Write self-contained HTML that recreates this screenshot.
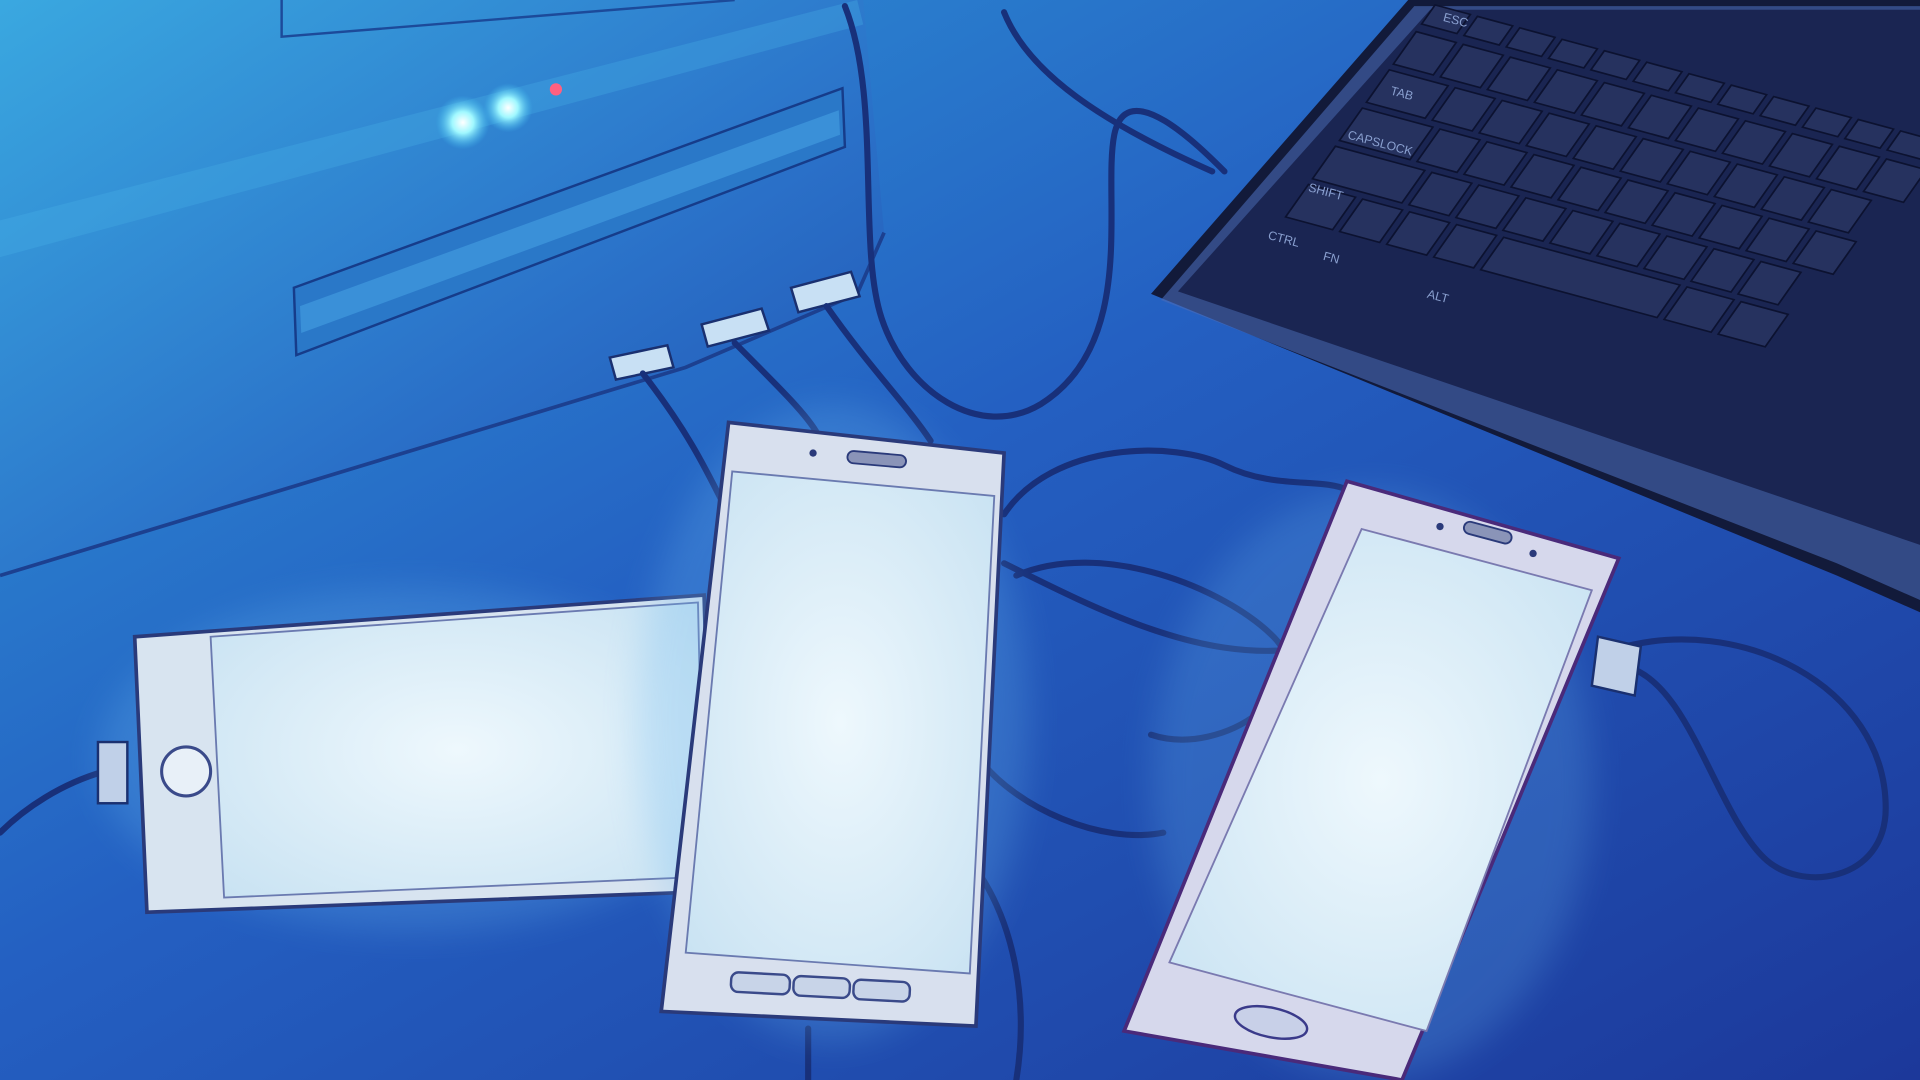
<!DOCTYPE html>
<html><head><meta charset="utf-8"><style>
html,body{margin:0;padding:0;width:1920px;height:1080px;overflow:hidden;background:#1e4cb0}
svg{display:block}
</style></head><body>
<svg width="1920" height="1080" viewBox="0 0 1568 882" preserveAspectRatio="none" xmlns="http://www.w3.org/2000/svg">
<defs>
<linearGradient id="bg" x1="0" y1="0" x2="1" y2="1">
<stop offset="0" stop-color="#2f9ad8"/><stop offset="0.45" stop-color="#2460c2"/><stop offset="1" stop-color="#1c389a"/>
</linearGradient>
<linearGradient id="pc" x1="0" y1="0" x2="1" y2="1">
<stop offset="0" stop-color="#3aa8e0"/><stop offset="0.6" stop-color="#2a70c8"/><stop offset="1" stop-color="#2050b0"/>
</linearGradient>
<radialGradient id="glow" cx="0.5" cy="0.5" r="0.5">
<stop offset="0" stop-color="#ffffff"/><stop offset="0.4" stop-color="#a0f8ff"/><stop offset="1" stop-color="#40c0f0" stop-opacity="0"/>
</radialGradient>
<radialGradient id="scr" cx="0.5" cy="0.5" r="0.7">
<stop offset="0" stop-color="#eef8fd"/><stop offset="1" stop-color="#c8e2f2"/>
</radialGradient>
<filter id="bl"><feGaussianBlur stdDeviation="14"/></filter>
</defs>
<rect width="1568" height="882" fill="url(#bg)"/>
<!-- PC tower -->
<polygon points="0,0 705,0 722,190 700,240 560,300 0,470" fill="url(#pc)"/>
<polyline points="0,470 560,300 700,240 722,190" fill="none" stroke="#1c4090" stroke-width="3"/>
<polygon points="0,180 700,0 705,20 0,210" fill="#48b4e8" opacity="0.3"/>
<polygon points="240,235 688,72 690,120 242,290" fill="#2a78c8" stroke="#163c8a" stroke-width="2"/>
<polygon points="245,250 685,90 686,110 246,272" fill="#3a90d8"/>
<polyline points="230,0 230,30 600,0" fill="none" stroke="#1c4a9a" stroke-width="2"/>
<circle cx="378" cy="100" r="22" fill="url(#glow)"/>
<circle cx="415" cy="88" r="20" fill="url(#glow)"/>
<circle cx="454" cy="73" r="5" fill="#ff6080"/>
<!-- USB plugs -->
<g fill="#c8e0f4" stroke="#1a3070" stroke-width="2">
<polygon points="498,292 545,282 550,300 503,310"/>
<polygon points="573,265 622,252 628,270 578,283"/>
<polygon points="646,235 695,222 702,242 652,255"/>
</g>
<!-- cables -->
<g fill="none" stroke="#18307a" stroke-width="5" stroke-linecap="round">
<path d="M525,305 C560,350 575,380 590,410"/>
<path d="M600,280 C640,320 660,340 668,355"/>
<path d="M675,250 C710,300 740,330 760,360"/>
<path d="M690,5 C720,80 700,200 720,260 C740,320 800,360 850,330 C930,280 900,160 910,110 C920,60 980,120 1000,140"/>
<path d="M820,10 C840,60 900,100 990,140"/>
<path d="M820,420 C860,360 960,360 1000,380 C1040,400 1080,390 1100,400"/>
<path d="M820,460 C900,500 980,540 1060,530"/>
<path d="M830,470 C900,440 1000,480 1040,520 C1080,560 1000,620 940,600"/>
<path d="M800,620 C830,660 900,690 950,680"/>
<path d="M1320,530 C1420,500 1540,560 1540,660 C1540,720 1470,730 1440,700 C1400,660 1380,560 1330,545"/>
<path d="M790,700 C830,750 840,820 830,882"/>
<path d="M85,630 C50,640 20,660 0,680"/>
<path d="M660,840 L660,882"/>
</g>
<!-- Laptop -->
<polygon points="940,240 1150,0 1568,0 1568,500 1500,470" fill="#121a3a"/>
<polygon points="948,245 1155,5 1568,5 1568,490 1500,460" fill="#4a6ab8" opacity="0.6"/>
<polygon points="962,238 1168,8 1568,8 1568,445 1510,425" fill="#1a2552"/>
<g fill="#26325f" stroke="#0c1230" stroke-width="1.5">
<g transform="matrix(0.96,0.26,-0.55,0.78,1172,4)">
<rect x="0" y="0" width="30" height="20"/><rect x="36" y="0" width="30" height="20"/><rect x="72" y="0" width="30" height="20"/><rect x="108" y="0" width="30" height="20"/><rect x="144" y="0" width="30" height="20"/><rect x="180" y="0" width="30" height="20"/><rect x="216" y="0" width="30" height="20"/><rect x="252" y="0" width="30" height="20"/><rect x="288" y="0" width="30" height="20"/><rect x="324" y="0" width="30" height="20"/><rect x="360" y="0" width="30" height="20"/><rect x="396" y="0" width="30" height="20"/>
<rect x="0" y="28" width="34" height="34"/><rect x="40" y="28" width="34" height="34"/><rect x="80" y="28" width="34" height="34"/><rect x="120" y="28" width="34" height="34"/><rect x="160" y="28" width="34" height="34"/><rect x="200" y="28" width="34" height="34"/><rect x="240" y="28" width="34" height="34"/><rect x="280" y="28" width="34" height="34"/><rect x="320" y="28" width="34" height="34"/><rect x="360" y="28" width="34" height="34"/><rect x="400" y="28" width="34" height="34"/>
<rect x="0" y="68" width="50" height="34"/><rect x="56" y="68" width="34" height="34"/><rect x="96" y="68" width="34" height="34"/><rect x="136" y="68" width="34" height="34"/><rect x="176" y="68" width="34" height="34"/><rect x="216" y="68" width="34" height="34"/><rect x="256" y="68" width="34" height="34"/><rect x="296" y="68" width="34" height="34"/><rect x="336" y="68" width="34" height="34"/><rect x="376" y="68" width="34" height="34"/>
<rect x="0" y="108" width="60" height="34"/><rect x="66" y="108" width="34" height="34"/><rect x="106" y="108" width="34" height="34"/><rect x="146" y="108" width="34" height="34"/><rect x="186" y="108" width="34" height="34"/><rect x="226" y="108" width="34" height="34"/><rect x="266" y="108" width="34" height="34"/><rect x="306" y="108" width="34" height="34"/><rect x="346" y="108" width="34" height="34"/><rect x="386" y="108" width="34" height="34"/>
<rect x="0" y="148" width="76" height="34"/><rect x="82" y="148" width="34" height="34"/><rect x="122" y="148" width="34" height="34"/><rect x="162" y="148" width="34" height="34"/><rect x="202" y="148" width="34" height="34"/><rect x="242" y="148" width="34" height="34"/><rect x="282" y="148" width="34" height="34"/><rect x="322" y="148" width="34" height="34"/><rect x="362" y="148" width="34" height="34"/>
<rect x="0" y="188" width="40" height="34"/><rect x="46" y="188" width="34" height="34"/><rect x="86" y="188" width="34" height="34"/><rect x="126" y="188" width="34" height="34"/><rect x="166" y="188" width="150" height="34"/><rect x="322" y="188" width="40" height="34"/><rect x="368" y="188" width="40" height="34"/>
</g>
</g>
<g fill="#8aa0d0" font-family="Liberation Sans, sans-serif" font-size="10">
<text x="1178" y="17" transform="rotate(15 1178 17)">ESC</text>
<text x="1135" y="77" transform="rotate(15 1135 77)">TAB</text>
<text x="1100" y="113" transform="rotate(15 1100 113)">CAPSLOCK</text>
<text x="1068" y="156" transform="rotate(15 1068 156)">SHIFT</text>
<text x="1035" y="195" transform="rotate(15 1035 195)">CTRL</text>
<text x="1080" y="212" transform="rotate(15 1080 212)">FN</text>
<text x="1165" y="243" transform="rotate(15 1165 243)">ALT</text>
</g>
<!-- Phone 1 horizontal -->
<ellipse cx="340" cy="620" rx="260" ry="140" fill="#6ab8f0" opacity="0.25" filter="url(#bl)"/>
<polygon points="110,520 575,486 582,728 120,745" fill="#d8e4f0" stroke="#2a3a7a" stroke-width="3"/>
<polygon points="172,520 570,492 575,716 183,733" fill="url(#scr)" stroke="#6a7ab0" stroke-width="1.5"/>
<circle cx="152" cy="630" r="20" fill="#e8f0f8" stroke="#3a4a8a" stroke-width="2.5"/>
<rect x="80" y="606" width="24" height="50" fill="#c0d0e8" stroke="#1a3070" stroke-width="2"/>
<!-- Phone 2 -->
<ellipse cx="680" cy="590" rx="160" ry="260" fill="#6ab8f0" opacity="0.25" filter="url(#bl)"/>
<polygon points="595,345 820,370 797,838 540,826" fill="#d8e0ee" stroke="#2a3a7a" stroke-width="3"/>
<polygon points="598,385 812,405 792,795 560,778" fill="url(#scr)" stroke="#6a7ab0" stroke-width="1.5"/>
<rect x="692" y="370" width="48" height="10" rx="5" fill="#8a94b8" stroke="#2a3a7a" stroke-width="1.5" transform="rotate(5 716 375)"/>
<circle cx="664" cy="370" r="3" fill="#2a3a7a"/>
<g fill="#c8d4e8" stroke="#3a4a8a" stroke-width="2">
<rect x="597" y="795" width="48" height="16" rx="6" transform="rotate(3 620 803)"/>
<rect x="648" y="798" width="46" height="16" rx="6" transform="rotate(3 670 806)"/>
<rect x="697" y="801" width="46" height="16" rx="6" transform="rotate(3 720 809)"/>
</g>
<!-- Phone 3 -->
<ellipse cx="1120" cy="640" rx="180" ry="240" fill="#6ab8f0" opacity="0.22" filter="url(#bl)"/>
<polygon points="1100,393 1322,456 1145,882 918,842" fill="#d6d8ec" stroke="#4a2a7a" stroke-width="3"/>
<polygon points="1112,432 1300,482 1165,842 955,786" fill="url(#scr)" stroke="#7a7ab0" stroke-width="1.5"/>
<rect x="1195" y="430" width="40" height="10" rx="5" fill="#8a94b8" stroke="#2a3a7a" stroke-width="1.5" transform="rotate(15 1215 435)"/>
<circle cx="1176" cy="430" r="3" fill="#2a3a7a"/><circle cx="1252" cy="452" r="3" fill="#2a3a7a"/>
<ellipse cx="1038" cy="835" rx="30" ry="12" fill="#c8d0e8" stroke="#3a3a8a" stroke-width="2" transform="rotate(12 1038 835)"/>
<polygon points="1305,520 1340,528 1335,568 1300,560" fill="#c0d0e8" stroke="#1a3070" stroke-width="2"/>
</svg>
</body></html>
